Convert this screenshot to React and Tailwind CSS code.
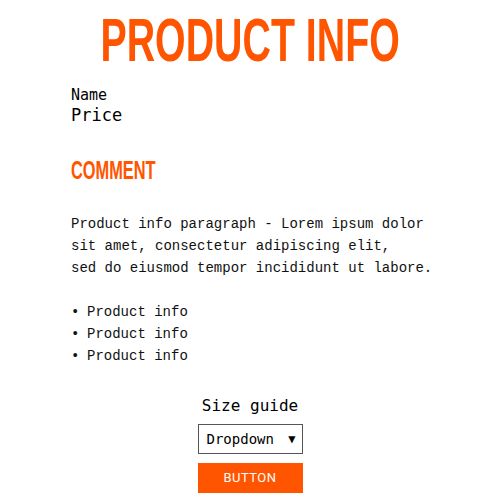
export default function App() {
  return (
    <div className="w-[500px] h-[500px] bg-white overflow-hidden">
      <div className="flex flex-col items-center pt-[9px]">
        <h1 className="text-[61px] leading-[62px] font-bold text-[#ff5500] whitespace-nowrap scale-x-[0.645]" style={{ fontFamily: '"Liberation Sans", sans-serif' }}>PRODUCT INFO</h1>
      </div>
      <div className="pl-[71px] pt-[14px]" style={{ fontFamily: '"DejaVu Sans Mono", monospace' }}>
        <div className="text-[15px] leading-[20px] text-black">Name</div>
        <div className="text-[17px] leading-[20px] text-black font-medium">Price</div>
      </div>
      <div className="pl-[71px] pt-[31px]">
        <h2 className="text-[26px] leading-[28px] font-bold text-[#ff5500] origin-left scale-x-[0.63] whitespace-nowrap" style={{ fontFamily: '"Liberation Sans", sans-serif' }}>COMMENT</h2>
      </div>
      <div className="pl-[71px] pt-[29px] text-[14px] leading-[22px] text-[#111]" style={{ fontFamily: '"Liberation Mono", monospace' }}>
        <p>Product info paragraph - Lorem ipsum dolor<br />sit amet, consectetur adipiscing elit,<br />sed do eiusmod tempor incididunt ut labore.</p>
        <ul className="mt-[22px]">
          <li className="flex"><span className="w-[16px]">•</span>Product info</li>
          <li className="flex"><span className="w-[16px]">•</span>Product info</li>
          <li className="flex"><span className="w-[16px]">•</span>Product info</li>
        </ul>
      </div>
      <div className="flex flex-col items-center pt-[28px]">
        <div className="text-[16px] leading-[22px] text-black" style={{ fontFamily: '"DejaVu Sans Mono", monospace' }}>Size guide</div>
        <div className="mt-[7px] w-[105px] h-[30px] border border-[#555] flex items-center justify-between pl-[8px] pr-[6px] text-[14px]" style={{ fontFamily: '"DejaVu Sans Mono", monospace' }}>
          <span>Dropdown</span><span className="text-[12px]">▼</span>
        </div>
        <div className="mt-[9px] w-[105px] h-[30px] bg-[#ff5500] flex items-center justify-center text-white text-[13px] tracking-[0.5px]" style={{ fontFamily: 'Roboto, sans-serif' }}>BUTTON</div>
      </div>
    </div>
  );
}
